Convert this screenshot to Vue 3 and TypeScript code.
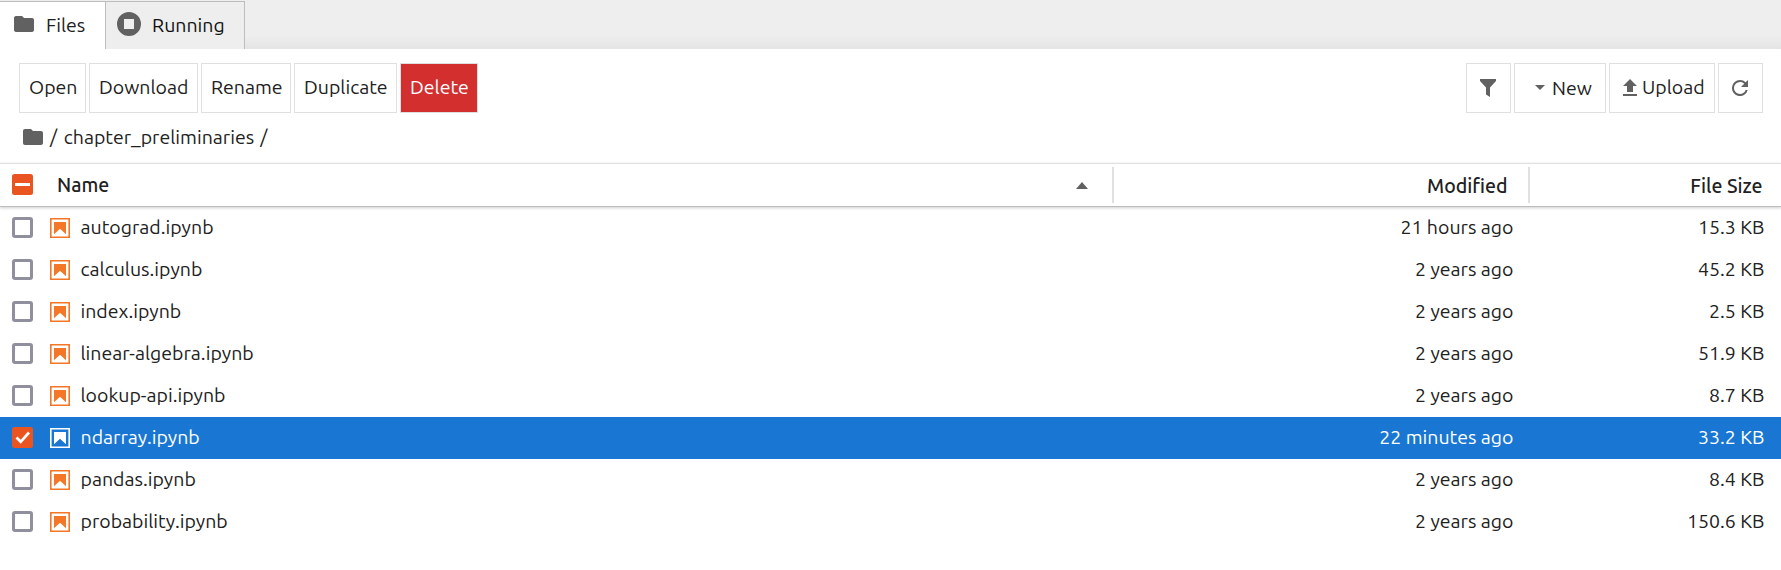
<script setup lang="ts">
import { ref } from 'vue'

interface FileItem {
  name: string
  modified: string
  size: string
}

const files: FileItem[] = [
  { name: 'autograd.ipynb', modified: '21 hours ago', size: '15.3 KB' },
  { name: 'calculus.ipynb', modified: '2 years ago', size: '45.2 KB' },
  { name: 'index.ipynb', modified: '2 years ago', size: '2.5 KB' },
  { name: 'linear-algebra.ipynb', modified: '2 years ago', size: '51.9 KB' },
  { name: 'lookup-api.ipynb', modified: '2 years ago', size: '8.7 KB' },
  { name: 'ndarray.ipynb', modified: '22 minutes ago', size: '33.2 KB' },
  { name: 'pandas.ipynb', modified: '2 years ago', size: '8.4 KB' },
  { name: 'probability.ipynb', modified: '2 years ago', size: '150.6 KB' },
]

const selected = ref<string>('ndarray.ipynb')

function toggle(name: string): void {
  selected.value = selected.value === name ? '' : name
}
</script>

<template>
  <div class="browser">
    <nav class="tabs">
      <div class="tab files active">
        <svg class="folder" viewBox="2 4 20 16"><path d="M10 4H4c-1.1 0-2 .9-2 2v12c0 1.1.9 2 2 2h16c1.1 0 2-.9 2-2V8c0-1.1-.9-2-2-2h-8z" /></svg>
        <span>Files</span>
      </div>
      <div class="tab running">
        <svg class="stop" viewBox="0 0 24 24"><path fill-rule="evenodd" d="M12 0a12 12 0 1 0 0 24 12 12 0 0 0 0-24zM7 7h10v10H7z" /></svg>
        <span>Running</span>
      </div>
    </nav>

    <div class="toolbar">
      <button class="open">Open</button>
      <button class="download">Download</button>
      <button class="rename">Rename</button>
      <button class="duplicate">Duplicate</button>
      <button class="delete">Delete</button>
      <div class="spacer"></div>
      <button class="square">
        <svg class="filter" viewBox="0 0 16 18"><path d="M0 0h16v2l-6 6.5V18l-4-2.5v-7L0 2z" /></svg>
      </button>
      <button class="new">
        <svg class="caret" viewBox="0 0 10 5"><path d="M0 0h10L5 5z" /></svg>
        <span>New</span>
      </button>
      <button class="upload">
        <svg class="up" viewBox="5 3 14 17"><path d="M9 16h6v-6h4l-7-7-7 7h4zm-4 2h14v2H5z" /></svg>
        <span>Upload</span>
      </button>
      <button class="square">
        <svg class="refresh" viewBox="4 4 16 16"><path d="M17.65 6.35A7.96 7.96 0 0 0 12 4a8 8 0 1 0 7.73 10h-2.08A6 6 0 1 1 12 6c1.66 0 3.14.69 4.22 1.78L13 11h7V4z" /></svg>
      </button>
    </div>

    <div class="crumbs">
      <svg class="folder" viewBox="2 4 20 16"><path d="M10 4H4c-1.1 0-2 .9-2 2v12c0 1.1.9 2 2 2h16c1.1 0 2-.9 2-2V8c0-1.1-.9-2-2-2h-8z" /></svg>
      <span class="slash">/</span>
      <span class="dir">chapter_preliminaries</span>
      <span>/</span>
    </div>

    <div class="header">
      <div class="name-col">
        <svg class="check" viewBox="0 0 21 21"><rect class="fill" width="21" height="21" rx="2.5" /><path class="dash" d="M3 9h15v3H3z" /></svg>
        <span class="title">Name</span>
        <svg class="sort" viewBox="0 0 12 7"><path d="M0 7 6 0l6 7z" /></svg>
      </div>
      <div class="modified-col"><span>Modified</span></div>
      <div class="size-col"><span>File Size</span></div>
    </div>

    <div class="list">
      <div
        v-for="file in files"
        :key="file.name"
        class="row"
        :class="{ selected: file.name === selected }"
        @click="toggle(file.name)"
      >
        <svg class="check" viewBox="0 0 21 21">
          <template v-if="file.name === selected">
            <rect class="fill" width="21" height="21" rx="2.5" />
            <path class="tick" d="m4.5 10.5 4.2 4.3 8.3-9.3" />
          </template>
          <rect v-else class="empty" x="1.5" y="1.5" width="18" height="18" rx="1.5" />
        </svg>
        <svg class="notebook" viewBox="0 0 20 20">
          <path fill-rule="evenodd" d="M0 0h20v20H0zM1.6 1.6v16.8h16.8V1.6z" />
          <path d="M4 4h12v12.2l-6-5.4-6 5.4z" />
        </svg>
        <span class="name">{{ file.name }}</span>
        <span class="modified">{{ file.modified }}</span>
        <span class="size">{{ file.size }}</span>
      </div>
    </div>
  </div>
</template>

<style>
body {
  margin: 0;
  background: #fff;
}
</style>

<style scoped>
.browser {
  height: 570px;
  overflow: hidden;
  background: #fff;
  color: #212121;
  font: 19.5px/24px Ubuntu, "Noto Sans", sans-serif;
}
svg {
  display: block;
  flex: none;
  fill: #616161;
}
.tabs {
  display: flex;
  box-sizing: border-box;
  height: 49px;
  padding-top: 1px;
  background: linear-gradient(#eee 0 36px, #e4e4e4);
}
.tab {
  display: flex;
  align-items: center;
  box-sizing: border-box;
  height: 48px;
  padding-bottom: 1px;
  border: solid #bdbdbd;
  border-width: 1px 1px 0 0;
  background: #eee;
  color: #111;
}
.tab.active {
  background: #fff;
  color: #212121;
}
.tab svg {
  margin-bottom: 2px;
}
.files {
  width: 106px;
  padding-left: 14px;
  gap: 12px;
}
.running {
  width: 139px;
  padding-left: 11px;
  gap: 11px;
}
.folder {
  width: 20px;
  height: 16px;
}
.stop {
  width: 24px;
  height: 24px;
}
.toolbar {
  display: flex;
  gap: 3px;
  padding: 14px 18px 0 19px;
}
.spacer {
  flex: 1;
}
button {
  display: flex;
  align-items: center;
  box-sizing: border-box;
  height: 50px;
  padding: 0 0 2px 9px;
  border: 1px solid #e0e0e0;
  background: #fff;
  color: #212121;
  font: inherit;
}
.open { width: 67px; }
.download { width: 109px; }
.rename { width: 90px; }
.duplicate { width: 103px; }
.delete {
  width: 78px;
  background: #d32f2f;
  color: #fff;
}
.square {
  width: 45px;
  justify-content: center;
  padding: 0 1px 0 0;
}
.new {
  width: 92px;
  padding: 0 0 0 20px;
  gap: 7px;
}
.upload {
  width: 106px;
  padding-left: 13px;
  gap: 5px;
}
.filter {
  width: 16px;
  height: 18px;
}
.caret {
  width: 10px;
  height: 5px;
  margin-bottom: 1px;
}
.up {
  width: 14px;
  height: 17px;
  margin-top: 1px;
}
.refresh {
  width: 16px;
  height: 16px;
}
.crumbs {
  display: flex;
  align-items: center;
  box-sizing: border-box;
  height: 50px;
  padding: 0 0 2px 23px;
}
.crumbs .slash {
  margin: 0 6.5px 0 7px;
}
.crumbs .dir {
  margin-right: 6px;
}
.header {
  display: flex;
  box-sizing: border-box;
  height: 44px;
  border: solid #e0e0e0;
  border-width: 1px 0;
  border-bottom-color: #bdbdbd;
  box-shadow: 0 1px 3px rgba(0, 0, 0, 0.2);
  font-weight: 500;
}
.name-col,
.modified-col,
.size-col {
  display: flex;
  align-items: center;
  box-sizing: border-box;
  height: 36px;
  margin-top: 3px;
}
.name-col {
  width: 1114px;
  padding: 0 24px 0 12px;
  border-right: 2px solid #e0e0e0;
}
.name-col .check {
  margin-bottom: 1px;
}
.title {
  flex: 1;
  margin-left: 24px;
}
.sort {
  width: 12px;
  height: 7px;
  margin-top: 1px;
}
.modified-col {
  width: 416px;
  justify-content: flex-end;
  padding: 2px 20.5px 0 0;
  border-right: 2px solid #e0e0e0;
}
.size-col {
  flex: 1;
  justify-content: flex-end;
  padding: 2px 18.5px 0 0;
}
.check {
  width: 21px;
  height: 21px;
}
.fill { fill: #e95420; }
.dash { fill: #fff; }
.tick {
  fill: none;
  stroke: #fff;
  stroke-width: 2.7;
}
.empty {
  fill: #fff;
  stroke: #8f8f9d;
  stroke-width: 3;
}
.row {
  display: flex;
  align-items: center;
  box-sizing: border-box;
  height: 42px;
  padding: 0 16.5px 2px 12px;
}
.row .check {
  margin-top: 1px;
}
.notebook {
  width: 20px;
  height: 20px;
  margin: 2px 10.5px 0 17px;
  fill: #f37726;
}
.name {
  flex: 1;
}
.size {
  width: 251px;
  text-align: right;
}
.row.selected {
  background: #1976d2;
  color: #fff;
}
.selected .notebook {
  fill: #fff;
}
</style>
